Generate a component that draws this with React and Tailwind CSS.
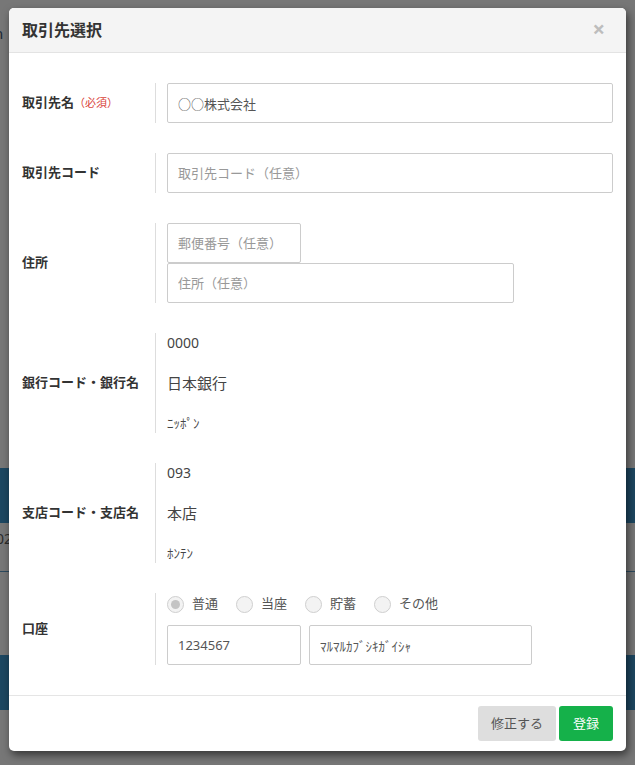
import React from 'react';

const font = { fontFamily: '"Noto Sans", "Noto Sans CJK JP", sans-serif' };

const Row = ({ label, children, className = '' }) => (
  <div className="flex">
    <div className="w-[133px] flex items-center text-[13px] font-bold text-[#333]">{label}</div>
    <div className={`flex-1 border-l border-[#dddddd] pl-[11px] ${className}`}>{children}</div>
  </div>
);

const Field = ({ className = '', ...props }) => (
  <input
    {...props}
    className={`block h-[40px] border border-[#cccccc] rounded-[2px] bg-white px-[10px] text-[13px] text-[#555] placeholder:text-[#999] outline-none ${className}`}
  />
);

const Radio = ({ label, checked }) => (
  <label className="flex items-center gap-[8px] mr-[18px]">
    <span className="w-[17px] h-[17px] rounded-full border border-[#cfcfcf] bg-[#f3f3f3] flex items-center justify-center">
      {checked && <span className="w-[9px] h-[9px] rounded-full bg-[#c4c4c4]" />}
    </span>
    <span className="text-[13px] text-[#555]">{label}</span>
  </label>
);

export default function App() {
  return (
    <div className="relative w-[635px] h-[765px] overflow-hidden bg-[#777777]" style={font}>
      {/* page behind the overlay */}
      <div className="flex flex-col">
        <div className="h-[468px] pt-[22px] text-[15px] text-[#1b2a36] -ml-[6px]">n</div>
        <div className="h-[55px] bg-[#1d4761]" />
        <div className="h-[48px] pt-[5px] text-[14px] text-[#2a2a2a] -ml-[4px]">02</div>
        <div className="h-[1px] bg-[#2c4a5e]" />
        <div className="h-[83px]" />
        <div className="h-[55px] bg-[#1d4761]" />
      </div>

      {/* modal */}
      <div className="absolute left-[9px] top-[8px] w-[617px] h-[743px] bg-white rounded-[5px] shadow-[2px_4px_8px_rgba(0,0,0,0.55)] flex flex-col overflow-hidden">
        <div className="h-[45px] shrink-0 bg-[#f4f4f4] border-b border-[#e3e3e3] flex items-center justify-between pl-[13px] pr-[21px]">
          <h1 className="text-[16px] font-bold text-[#333]">取引先選択</h1>
          <span className="text-[22px] font-bold leading-none text-[#bdbdbd] -mt-[4px]">×</span>
        </div>

        <div className="flex flex-col gap-[30px] pt-[30px] pb-[30px] pl-[13px] pr-[13px]">
          <Row label={<span>取引先名<span className="text-[11px] font-normal text-[#d9443a]">（必須）</span></span>}>
            <Field defaultValue="○○株式会社" className="w-full" />
          </Row>
          <Row label="取引先コード">
            <Field placeholder="取引先コード（任意）" className="w-full" />
          </Row>
          <Row label="住所">
            <Field placeholder="郵便番号（任意）" className="w-[134px]" />
            <Field placeholder="住所（任意）" className="w-[347px]" />
          </Row>
          <Row label="銀行コード・銀行名" className="flex flex-col gap-[20px] text-[#444]">
            <div className="leading-[20px] text-[14px]">0000</div>
            <div className="leading-[20px] text-[15px]">日本銀行</div>
            <div className="leading-[20px] text-[13px]">ﾆｯﾎﾟﾝ</div>
          </Row>
          <Row label="支店コード・支店名" className="flex flex-col gap-[20px] text-[#444]">
            <div className="leading-[20px] text-[14px]">093</div>
            <div className="leading-[20px] text-[15px]">本店</div>
            <div className="leading-[20px] text-[13px]">ﾎﾝﾃﾝ</div>
          </Row>
          <Row label="口座" className="flex flex-col gap-[10px]">
            <div className="h-[22px] flex items-center">
              <Radio label="普通" checked />
              <Radio label="当座" />
              <Radio label="貯蓄" />
              <Radio label="その他" />
            </div>
            <div className="flex gap-[8px]">
              <Field defaultValue="1234567" className="w-[134px]" />
              <Field defaultValue="ﾏﾙﾏﾙｶﾌﾞｼｷｶﾞｲｼｬ" className="w-[223px] text-[12px]" />
            </div>
          </Row>
        </div>

        <div className="border-t border-[#e5e5e5] flex justify-end gap-[3px] pt-[10px] pr-[13px]">
          <button className="w-[78px] h-[35px] rounded-[3px] bg-[#dedede] text-[13px] text-[#555]">修正する</button>
          <button className="w-[54px] h-[35px] rounded-[3px] bg-[#15b14a] text-[13px] text-white">登録</button>
        </div>
      </div>
    </div>
  );
}
